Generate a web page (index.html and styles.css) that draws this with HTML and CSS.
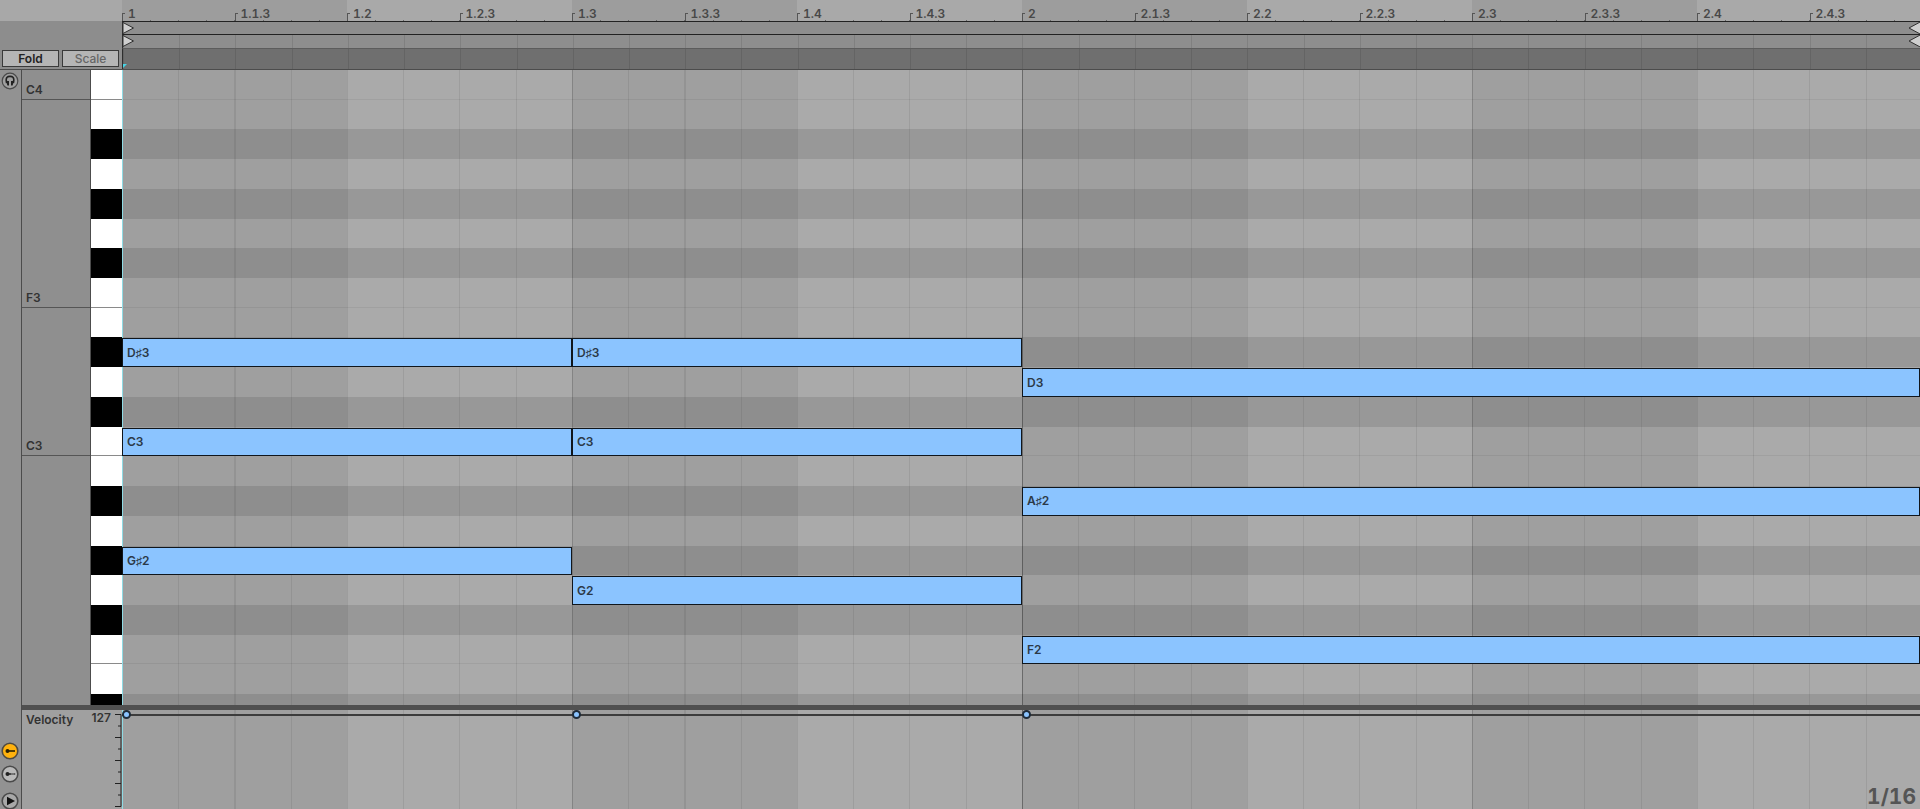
FILE: index.html
```html
<!DOCTYPE html>
<html lang="en">
<head>
    <meta charset="UTF-8">
    <meta name="viewport" content="width=device-width, initial-scale=1.0">
    <title>MIDI Note Editor</title>
    <link rel="stylesheet" href="styles.css">
</head>
<body>
    <main class="editor">
        <header class="top">
            <div class="corner">
                <div class="corner-cap"></div>
                <div class="modes">
                    <button type="button" class="mode">Fold</button>
                    <button type="button" class="mode off">Scale</button>
                </div>
            </div>
            <div class="timeline">
                <div class="ruler">
                    <span>1</span><span>1.1.3</span><span>1.2</span><span>1.2.3</span>
                    <span>1.3</span><span>1.3.3</span><span>1.4</span><span>1.4.3</span>
                    <span>2</span><span>2.1.3</span><span>2.2</span><span>2.2.3</span>
                    <span>2.3</span><span>2.3.3</span><span>2.4</span><span>2.4.3</span>
                </div>
                <div class="lane loop">
                    <svg width="13" height="12" viewBox="0 0 13 12"><path d="M0 0.5 L10.5 6 L0 11.5 Z"/></svg>
                    <svg width="12" height="12" viewBox="0 0 12 12"><path d="M14 -1 L1 6 L14 13 Z"/></svg>
                </div>
                <div class="lane markers">
                    <svg width="13" height="12" viewBox="0 0 13 12"><path d="M0 0.5 L10.5 6 L0 11.5 Z"/></svg>
                    <svg width="12" height="12" viewBox="0 0 12 12"><path d="M14 -1 L1 6 L14 13 Z"/></svg>
                </div>
                <div class="lane scrub"><i class="insert"></i></div>
            </div>
        </header>

        <div class="body">
            <aside class="rail">
                <button type="button" class="round" aria-label="Preview">
                    <svg width="18" height="18" viewBox="0 0 18 18">
                        <circle cx="9" cy="9" r="7.8" fill="#a0a0a0" stroke="#4a4a4a" stroke-width="1.2"/>
                        <path d="M5.6 11 C4 4.2 7.4 4.4 9 4.4 C10.6 4.4 14 4.2 12.4 11" fill="none" stroke="#222" stroke-width="1.6"/>
                        <path d="M5 9 H8 V13.4 H6.4 Z M13 9 H10 V13.4 H11.6 Z" fill="#222"/>
                    </svg>
                </button>
                <div class="lanes">
                    <button type="button" class="round" aria-label="Velocity lane">
                        <svg width="18" height="18" viewBox="0 0 18 18">
                            <circle cx="9" cy="9" r="7.8" fill="#ffb20d" stroke="#4f4a40" stroke-width="1.6"/>
                            <circle cx="6.5" cy="9" r="2" fill="#2a2000"/>
                            <path d="M6 9 H14" stroke="#2a2000" stroke-width="1.6"/>
                        </svg>
                    </button>
                    <button type="button" class="round" aria-label="Chance lane">
                        <svg width="18" height="18" viewBox="0 0 18 18">
                            <circle cx="9" cy="9" r="7.8" fill="#bababa" stroke="#4a4a4a" stroke-width="1.6"/>
                            <circle cx="6.5" cy="9" r="2" fill="#222"/>
                            <path d="M8 9 H10.6 M11.4 9 H12.6 M13.2 9 H14.2" stroke="#222" stroke-width="1.3"/>
                        </svg>
                    </button>
                    <button type="button" class="round play" aria-label="Show lanes">
                        <svg width="18" height="18" viewBox="0 0 18 18">
                            <circle cx="9" cy="9" r="7.8" fill="#a8a8a8" stroke="#4a4a4a" stroke-width="1.6"/>
                            <path d="M6 4.8 L14 9 L6 13.2 Z" fill="#111"/>
                        </svg>
                    </button>
                </div>
            </aside>

            <div class="panes">
                <section class="roll">
                    <div class="octaves rows">
                        <span class="c4">C4</span>
                        <span class="f3">F3</span>
                        <span class="c3">C3</span>
                        <span class="low"></span>
                    </div>
                    <div class="keys rows">
                        <i class="line"></i><i></i><i class="black"></i><i></i><i class="black"></i><i></i>
                        <i class="black"></i><i class="line"></i><i></i><i class="black"></i><i></i><i class="black"></i>
                        <i class="line"></i><i></i><i class="black"></i><i></i><i class="black"></i><i></i>
                        <i class="black"></i><i class="line"></i><i></i><i class="black"></i>
                    </div>
                    <div class="grid">
                        <div class="canvas beats rows">
                            <i class="row line c4"></i>
                            <i class="row dark as3"></i>
                            <i class="row dark gs3"></i>
                            <i class="row dark fs3"></i>
                            <i class="row line f3"></i>
                            <i class="row dark ds3"></i>
                            <i class="row dark cs3"></i>
                            <i class="row line c3"></i>
                            <i class="row dark as2"></i>
                            <i class="row dark gs2"></i>
                            <i class="row dark fs2"></i>
                            <i class="row line f2"></i>
                            <i class="row dark ds2"></i>
                            <div class="note ds3 first">D♯3</div>
                            <div class="note c3 first">C3</div>
                            <div class="note gs2 first">G♯2</div>
                            <div class="note ds3 second">D♯3</div>
                            <div class="note c3 second">C3</div>
                            <div class="note g2 second">G2</div>
                            <div class="note d3 third">D3</div>
                            <div class="note as2 third">A♯2</div>
                            <div class="note f2 third">F2</div>
                        </div>
                    </div>
                </section>

                <section class="velocity">
                    <div class="scale">
                        <span>Velocity</span>
                        <span class="max">127</span>
                        <svg width="8" height="99" viewBox="0 0 8 99">
                            <path d="M1 4.5 H7 V96.5 H1 M1 27.5 H7 M1 50.5 H7 M1 73.5 H7 M4 16 H7 M4 39 H7 M4 62 H7 M4 85 H7"/>
                        </svg>
                    </div>
                    <div class="grid">
                        <div class="canvas beats stems">
                            <i class="stem first"></i>
                            <i class="stem second"></i>
                            <i class="stem third"></i>
                        </div>
                        <span class="resolution">1/16</span>
                    </div>
                </section>
            </div>
        </div>
    </main>
</body>
</html>
```

FILE: styles.css
```css
* {
    box-sizing: border-box;
}
body {
    margin: 0;
    font-family: Inter, "Liberation Sans", sans-serif;
    font-size: 12px;
    font-weight: 600;
    line-height: 14px;
    color: #333;
    background-color: #8f8f8f;
}
button {
    font: inherit;
    color: inherit;
    padding: 0;
    cursor: pointer;
}
svg {
    display: block;
}
.editor {
    display: flex;
    flex-direction: column;
    height: 100vh;
    overflow: hidden;
}

/* header */
.top {
    display: flex;
    flex: none;
    height: 70px;
    border-bottom: 1px solid #4c4c4c;
}
.corner {
    display: flex;
    flex-direction: column;
    justify-content: space-between;
    width: 122px;
    background-color: #8d8d8d;
}
.corner-cap {
    height: 21px;
    background-color: #a8a8a8;
}
.modes {
    display: flex;
    gap: 3px;
    padding: 0 3px 2px 2px;
}
.mode {
    flex: 1;
    height: 17px;
    line-height: 14px;
    border: 1px solid #3a3a3a;
    background-color: #b5b5b5;
    color: #222;
}
.mode.off {
    font-weight: 500;
    color: #666;
}
.timeline {
    flex: 1;
    min-width: 0;
    overflow: hidden;
}
.ruler {
    display: grid;
    grid-template-columns: repeat(16, 1fr);
    width: calc(100% + 2px);
    height: 21px;
    font-variant-numeric: tabular-nums;
    color: #484848;
    background:
        repeating-linear-gradient(90deg, #666 0 1px, transparent 1px 1.5625%) 0 100% / 100% 1px no-repeat,
        repeating-linear-gradient(90deg, #9d9d9d 0 12.5%, #a9a9a9 12.5% 25%);
}
.ruler span {
    padding: 7px 0 0 6px;
    background:
        linear-gradient(#555, #555) 0 100% / 1px 8px no-repeat,
        linear-gradient(#555, #555) 0 13px / 3px 1px no-repeat;
}
.lane {
    display: flex;
    justify-content: space-between;
    border-left: 1px solid #2e2e2e;
}
.lane path {
    fill: #cfcfcf;
    stroke: #303030;
}
.loop {
    height: 14px;
    border-top: 1px solid #222;
    border-bottom: 1px solid #222;
    background-color: #8e8e8e;
}
.markers,
.scrub {
    background-image: repeating-linear-gradient(90deg, rgba(0, 0, 0, 0.1) 0 1px, transparent 1px calc((100% + 2px) / 32));
}
.markers {
    height: 13px;
    background-color: #8e8e8e;
}
.scrub {
    height: 21px;
    border-top: 1px solid #5c5c5c;
    background-color: #6f6f6f;
    align-items: flex-end;
}
.insert {
    width: 4px;
    height: 4px;
    margin-bottom: 1px;
    background-color: #46d4e6;
    clip-path: polygon(0 0, 100% 0, 0 100%);
}

/* left rail */
.body {
    display: flex;
    flex: 1;
    min-height: 0;
}
.rail {
    display: flex;
    flex-direction: column;
    justify-content: space-between;
    width: 22px;
    padding-top: 2px;
    border-right: 1px solid #4c4c4c;
    background-color: #929292;
}
.round {
    display: block;
    margin-left: 1px;
    border: 0;
    background: none;
}
.lanes {
    display: flex;
    flex-direction: column;
    gap: 5px;
}
.play {
    padding-top: 4px;
    margin-bottom: -1px;
}
.panes {
    display: flex;
    flex: 1;
    flex-direction: column;
    min-width: 0;
}

/* piano roll, the last row is cut off by the velocity pane */
.roll {
    display: flex;
    flex: 1;
    min-height: 0;
    border-bottom: 5px solid #505050;
}
.rows {
    display: grid;
    grid-template-rows: repeat(21, minmax(0, 30fr)) minmax(0, 11fr);
}
.octaves {
    width: 69px;
    border-right: 1px solid #4c4c4c;
}
.octaves span {
    display: flex;
    align-items: flex-end;
    padding: 0 0 2px 4px;
    border-bottom: 1px solid #555;
}
.octaves .f3 {
    grid-row: 2 / 9;
}
.octaves .c3 {
    grid-row: 9 / 14;
}
.octaves .low {
    grid-row: 14 / 23;
    border: 0;
}
.keys {
    width: 31px;
    background-color: #fff;
}
.keys .black {
    background-color: #000;
}
.keys .line {
    border-bottom: 1px solid #8a8a8a;
}
.grid {
    position: relative;
    display: flex;
    flex: 1;
    min-width: 0;
    overflow: hidden;
}
.canvas {
    flex: none;
    width: calc(100% + 2px);
    grid-template-columns: repeat(8, minmax(0, 1fr));
}
.beats {
    background:
        linear-gradient(#8fdbe4, #8fdbe4) 0 0 / 1px 100% no-repeat,
        linear-gradient(rgba(0, 0, 0, 0.2), rgba(0, 0, 0, 0.2)) 50% 0 / 1px 100% no-repeat,
        repeating-linear-gradient(90deg, rgba(0, 0, 0, 0.1) 0 1px, transparent 1px 25%),
        repeating-linear-gradient(90deg, rgba(0, 0, 0, 0.08) 0 1px, transparent 1px 3.125%),
        repeating-linear-gradient(90deg, #9f9f9f 0 12.5%, #aaa 12.5% 25%);
}
.row {
    grid-column: 1 / -1;
    margin-left: 1px;
}
.row.dark {
    background-color: rgba(0, 0, 0, 0.1);
}
.row.line {
    border-bottom: 1px solid rgba(0, 0, 0, 0.06);
}
.note {
    display: flex;
    align-items: center;
    margin-top: 1px;
    padding-left: 4px;
    border: 1px solid #10161c;
    background-color: #8bc4ff;
    color: #2b3947;
}
.first {
    grid-column: 1 / 3;
}
.second {
    grid-column: 3 / 5;
}
.third {
    grid-column: 5 / 9;
}
.note.third {
    margin-right: 2px;
}
.c4 { grid-row: 1; }
.as3 { grid-row: 3; }
.gs3 { grid-row: 5; }
.fs3 { grid-row: 7; }
.f3 { grid-row: 8; }
.ds3 { grid-row: 10; }
.d3 { grid-row: 11; }
.cs3 { grid-row: 12; }
.c3 { grid-row: 13; }
.as2 { grid-row: 15; }
.gs2 { grid-row: 17; }
.g2 { grid-row: 18; }
.fs2 { grid-row: 19; }
.f2 { grid-row: 20; }
.ds2 { grid-row: 22; }

/* velocity lane */
.velocity {
    display: flex;
    flex: none;
    height: 99px;
}
.scale {
    display: flex;
    justify-content: space-between;
    width: 100px;
    padding-left: 4px;
    background-color: #a0a0a0;
}
.scale span {
    padding-top: 3px;
}
.scale .max {
    flex: 1;
    padding: 1px 3px 0 0;
    text-align: right;
}
.scale path {
    fill: none;
    stroke: #222;
}
.stems {
    display: grid;
}
.stem {
    grid-row: 1;
    background: linear-gradient(#3c3c3c, #3c3c3c) 0 4px / 100% 2px no-repeat;
}
.stem::before {
    content: "";
    display: block;
    box-sizing: border-box;
    width: 9px;
    height: 9px;
    border: 2px solid #1f2c3a;
    border-radius: 50%;
    background-color: #8bc4ff;
}
.resolution {
    position: absolute;
    right: 4px;
    bottom: 0;
    font-size: 21px;
    font-weight: 700;
    line-height: 24px;
    color: #555;
    font-variant-numeric: tabular-nums;
}
```
